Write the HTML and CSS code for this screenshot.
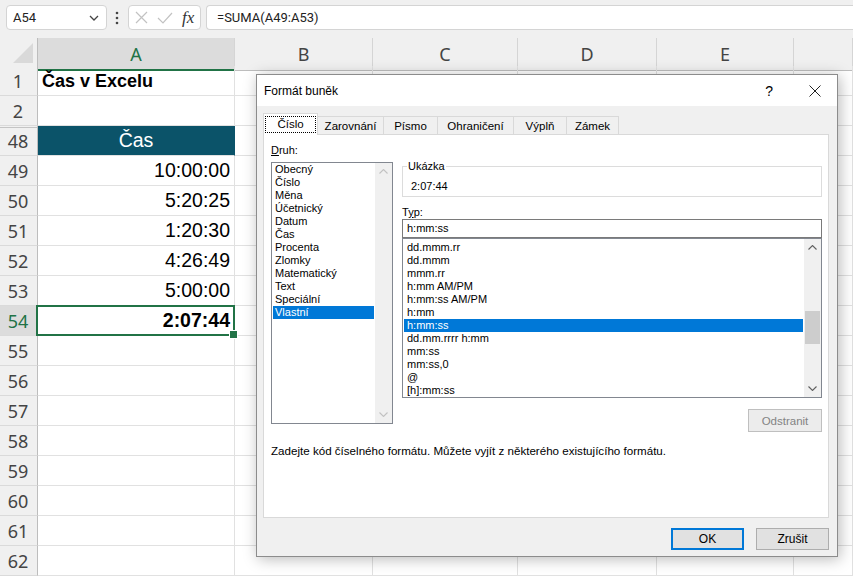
FILE: index.html
```html
<!DOCTYPE html>
<html lang="cs">
<head>
<meta charset="utf-8">
<title>Formát buněk</title>
<link rel="stylesheet" href="styles.css">
</head>
<body>
<div class="app">
  <div class="topbar">
    <div class="namebox"><span class="nb-text">A54</span><svg class="nb-chev" width="10" height="6" viewBox="0 0 10 6"><path d="M1 1l4 4 4-4"/></svg></div>
    <svg class="vdots" width="4" height="14" viewBox="0 0 4 14"><circle cx="2" cy="2" r="1.3"/><circle cx="2" cy="7" r="1.3"/><circle cx="2" cy="12" r="1.3"/></svg>
    <div class="fxbox">
      <svg class="ic-x" width="13" height="13" viewBox="0 0 13 13"><path d="M1 1l11 11M12 1L1 12"/></svg>
      <svg class="ic-ok" width="16" height="12" viewBox="0 0 16 12"><path d="M1 6l5 5L15 1"/></svg>
      <span class="fx">fx</span>
    </div>
    <div class="formula">=SUMA(A49:A53)</div>
  </div>

  <div class="sheet">
    <div class="row hdr">
      <div class="corner"><svg width="37" height="28" viewBox="0 0 37 28"><polygon points="33,5 33,25 13,25"/></svg></div>
      <div class="ch ch-sel">A</div><div class="ch">B</div><div class="ch">C</div><div class="ch">D</div><div class="ch">E</div><div class="ch"></div>
    </div>
    <div class="row"><div class="rh">1</div><div class="c title">Čas v Excelu</div><div class="c"></div><div class="c"></div><div class="c"></div><div class="c"></div><div class="c"></div></div>
    <div class="row"><div class="rh">2</div><div class="c"></div><div class="c"></div><div class="c"></div><div class="c"></div><div class="c"></div><div class="c"></div></div>
    <div class="row"><div class="rh rh-gap">48</div><div class="c head">Čas</div><div class="c"></div><div class="c"></div><div class="c"></div><div class="c"></div><div class="c"></div></div>
    <div class="row"><div class="rh">49</div><div class="c num">10:00:00</div><div class="c"></div><div class="c"></div><div class="c"></div><div class="c"></div><div class="c"></div></div>
    <div class="row"><div class="rh">50</div><div class="c num">5:20:25</div><div class="c"></div><div class="c"></div><div class="c"></div><div class="c"></div><div class="c"></div></div>
    <div class="row"><div class="rh">51</div><div class="c num">1:20:30</div><div class="c"></div><div class="c"></div><div class="c"></div><div class="c"></div><div class="c"></div></div>
    <div class="row"><div class="rh">52</div><div class="c num">4:26:49</div><div class="c"></div><div class="c"></div><div class="c"></div><div class="c"></div><div class="c"></div></div>
    <div class="row"><div class="rh">53</div><div class="c num">5:00:00</div><div class="c"></div><div class="c"></div><div class="c"></div><div class="c"></div><div class="c"></div></div>
    <div class="row"><div class="rh rh-sel">54</div><div class="c num bold cur">2:07:44</div><div class="c"></div><div class="c"></div><div class="c"></div><div class="c"></div><div class="c"></div></div>
    <div class="row"><div class="rh">55</div><div class="c"></div><div class="c"></div><div class="c"></div><div class="c"></div><div class="c"></div><div class="c"></div></div>
    <div class="row"><div class="rh">56</div><div class="c"></div><div class="c"></div><div class="c"></div><div class="c"></div><div class="c"></div><div class="c"></div></div>
    <div class="row"><div class="rh">57</div><div class="c"></div><div class="c"></div><div class="c"></div><div class="c"></div><div class="c"></div><div class="c"></div></div>
    <div class="row"><div class="rh">58</div><div class="c"></div><div class="c"></div><div class="c"></div><div class="c"></div><div class="c"></div><div class="c"></div></div>
    <div class="row"><div class="rh">59</div><div class="c"></div><div class="c"></div><div class="c"></div><div class="c"></div><div class="c"></div><div class="c"></div></div>
    <div class="row"><div class="rh">60</div><div class="c"></div><div class="c"></div><div class="c"></div><div class="c"></div><div class="c"></div><div class="c"></div></div>
    <div class="row"><div class="rh">61</div><div class="c"></div><div class="c"></div><div class="c"></div><div class="c"></div><div class="c"></div><div class="c"></div></div>
    <div class="row"><div class="rh">62</div><div class="c"></div><div class="c"></div><div class="c"></div><div class="c"></div><div class="c"></div><div class="c"></div></div>
  </div>

  <div class="dialog">
    <div class="dlg-title">
      <span class="dlg-name">Formát buněk</span>
      <span class="dlg-help">?</span>
      <svg class="dlg-close" width="12" height="12" viewBox="0 0 12 12"><path d="M0.5 0.5l11 11M11.5 0.5l-11 11"/></svg>
    </div>
    <div class="dlg-body">
      <div class="tabs">
        <div class="tab on t1"><span class="focus">Číslo</span></div>
        <div class="tab t2">Zarovnání</div>
        <div class="tab t3">Písmo</div>
        <div class="tab t4">Ohraničení</div>
        <div class="tab t5">Výplň</div>
        <div class="tab t6">Zámek</div>
      </div>
      <div class="panel">
        <div class="cols">
          <div class="col-left">
            <div class="lbl"><u>D</u>ruh:</div>
            <div class="listbox lb-left">
              <div class="items">
                <div class="item">Obecný</div>
                <div class="item">Číslo</div>
                <div class="item">Měna</div>
                <div class="item">Účetnický</div>
                <div class="item">Datum</div>
                <div class="item">Čas</div>
                <div class="item">Procenta</div>
                <div class="item">Zlomky</div>
                <div class="item">Matematický</div>
                <div class="item">Text</div>
                <div class="item">Speciální</div>
                <div class="item sel">Vlastní</div>
              </div>
              <div class="vscroll off">
                <div class="arrow"><svg width="9" height="5" viewBox="0 0 9 5"><path d="M0.5 4.5l4-4 4 4"/></svg></div>
                <div class="track"></div>
                <div class="arrow"><svg width="9" height="5" viewBox="0 0 9 5"><path d="M0.5 0.5l4 4 4-4"/></svg></div>
              </div>
            </div>
          </div>
          <div class="col-right">
            <fieldset class="sample"><legend>Ukázka</legend><div class="sample-val">2:07:44</div></fieldset>
            <div class="lbl typ">T<u>y</u>p:</div>
            <div class="input">h:mm:ss</div>
            <div class="listbox lb-right">
              <div class="items">
                <div class="item">dd.mmm.rr</div>
                <div class="item">dd.mmm</div>
                <div class="item">mmm.rr</div>
                <div class="item">h:mm AM/PM</div>
                <div class="item">h:mm:ss AM/PM</div>
                <div class="item">h:mm</div>
                <div class="item sel">h:mm:ss</div>
                <div class="item">dd.mm.rrrr h:mm</div>
                <div class="item">mm:ss</div>
                <div class="item">mm:ss,0</div>
                <div class="item">@</div>
                <div class="item">[h]:mm:ss</div>
              </div>
              <div class="vscroll">
                <div class="arrow"><svg width="9" height="5" viewBox="0 0 9 5"><path d="M0.5 4.5l4-4 4 4"/></svg></div>
                <div class="track"><div class="thumb"></div></div>
                <div class="arrow"><svg width="9" height="5" viewBox="0 0 9 5"><path d="M0.5 0.5l4 4 4-4"/></svg></div>
              </div>
            </div>
            <div class="btn disabled odst">Odstranit</div>
          </div>
        </div>
        <div class="desc">Zadejte kód číselného formátu. Můžete vyjít z některého existujícího formátu.</div>
      </div>
      <div class="buttons">
        <div class="btn primary">OK</div>
        <div class="btn">Zrušit</div>
      </div>
    </div>
  </div>
</div>
</body>
</html>
```

FILE: styles.css
```css
* { box-sizing: border-box; margin: 0; padding: 0; }
html, body { width: 853px; height: 578px; overflow: hidden; }
body { background: #fff; font-family: "Liberation Sans", Arial, sans-serif; color: #000; }
.app { position: relative; width: 853px; height: 578px; overflow: hidden; }

/* ---------- formula bar ---------- */
.topbar { height: 38px; background: #f0f0f0; display: flex; align-items: flex-start; padding: 5px 0 0 6px; }
.namebox { width: 101px; height: 25px; background: #fff; border: 1px solid #d4d4d4; border-radius: 4px; display: flex; align-items: center; justify-content: space-between; padding: 0 7px 0 6px; }
.nb-text { font-family: Roboto, "Liberation Sans", sans-serif; font-size: 13px; color: #222; }
.nb-chev path { stroke: #444; fill: none; stroke-width: 1.3; }
.vdots { margin: 6px 0 0 8px; }
.vdots circle { fill: #444; }
.fxbox { margin-left: 9px; width: 73px; height: 25px; background: #fff; border: 1px solid #d4d4d4; border-radius: 4px; display: flex; align-items: center; padding-left: 6px; }
.ic-x path, .ic-ok path { stroke: #c2c2c2; fill: none; stroke-width: 1.2; }
.ic-ok { margin-left: 9px; }
.fx { margin-left: 9px; font-family: "Liberation Serif", serif; font-style: italic; font-size: 17px; color: #333; }
.formula { margin-left: 5px; flex: 1; height: 25px; background: #fff; border: 1px solid #d4d4d4; border-right: none; border-radius: 4px 0 0 4px; padding-left: 10px; display: flex; align-items: center; font-family: Roboto, "Liberation Sans", sans-serif; font-size: 13px; color: #222; }

/* ---------- sheet ---------- */
.sheet { display: flex; flex-direction: column; }
.row { display: grid; grid-template-columns: 38px 197px 138px 145px 139px 137px 1fr; height: 30px; }
.row.hdr { height: 28px; }
.corner { background: #f0f0f0; border-right: 1px solid #bdbdbd; border-bottom: 1px solid #bdbdbd; }
.corner polygon { fill: #d9d9d9; }
.ch { background: #f0f0f0; border-right: 1px solid #d5d5d5; border-bottom: 1px solid #bdbdbd; display: flex; align-items: center; justify-content: center; font-family: "Noto Sans", sans-serif; font-size: 18px; color: #444; }
.ch-sel { background: #dcdcdc; color: #217346; border-bottom: 2px solid #217346; }
.rh { background: #f0f0f0; border-right: 1px solid #bdbdbd; border-bottom: 1px solid #dadada; display: flex; align-items: center; justify-content: center; font-family: "Noto Sans", sans-serif; font-size: 18px; color: #444; padding-right: 1px; }
.rh-gap { background: linear-gradient(#f0f0f0 0 1px, #c4c4c4 1px 2px, #f0f0f0 2px); }
.rh-sel { background: #dcdcdc; color: #217346; }
.c { border-right: 1px solid #e1e1e1; border-bottom: 1px solid #e1e1e1; display: flex; align-items: center; }
.title { font-weight: bold; font-size: 18px; padding-left: 4px; padding-top: 2px; }
.head { background: #0b5369; color: #fff; justify-content: center; font-size: 19.5px; border-right-color: #0b5369; }
.num { justify-content: flex-end; padding-right: 4px; font-size: 19.5px; }
.bold { font-weight: bold; }
.cur { position: relative; z-index: 2; }
.cur::after { content: ""; position: absolute; left: -2px; top: -1px; right: -1px; bottom: -1px; border: 2px solid #217346; }
.cur::before { content: ""; position: absolute; right: -4px; bottom: -4px; width: 7px; height: 7px; background: #217346; border: 1px solid #fff; z-index: 3; }

/* ---------- dialog ---------- */
.dialog { position: absolute; left: 256px; top: 74px; width: 582px; height: 483px; border: 1px solid #8c8c8c; background: #f0f0f0; box-shadow: 2px 2px 14px rgba(0,0,0,0.28); font-family: "Liberation Sans", Arial, sans-serif; font-size: 11px; z-index: 10; }
.dlg-title { height: 31px; background: #fff; display: flex; align-items: center; padding-left: 7px; }
.dlg-name { flex: 1; font-size: 12px; }
.dlg-help { font-size: 14px; margin-right: 36px; }
.dlg-close { margin-right: 16px; }
.dlg-close path { stroke: #222; stroke-width: 1; fill: none; }
.dlg-body { padding: 7px 8px 0 6px; }
.tabs { display: flex; align-items: flex-end; height: 21px; position: relative; z-index: 1; }
.tab { height: 18px; border: 1px solid #d9d9d9; border-left: none; border-bottom: none; display: flex; align-items: center; justify-content: center; background: #f0f0f0; font-size: 11.5px; }
.tab.on { height: 22px; margin-bottom: -1px; background: #fff; border-left: 1px solid #d9d9d9; padding-bottom: 1px; }
.t1 { width: 55px; } .t2 { width: 66px; } .t3 { width: 54px; } .t4 { width: 76px; } .t5 { width: 53px; } .t6 { width: 52px; }
.focus { outline: 1px dotted #000; outline-offset: 0; padding: 1px 11px 2px; }
.panel { height: 384px; background: #fff; border: 1px solid #d9d9d9; padding: 9px 6px 0 7px; }
.cols { display: flex; gap: 9px; align-items: flex-start; }
.col-left { width: 122px; display: flex; flex-direction: column; }
.col-right { width: 420px; display: flex; flex-direction: column; }
.lbl { line-height: 13px; }
.col-left .lbl { margin-bottom: 5px; }
.listbox { display: flex; background: #fff; border: 1px solid #828790; overflow: hidden; }
.lb-left { height: 262px; }
.lb-right { height: 160px; }
.items { flex: 1; padding: 0 1px; min-width: 0; }
.lb-right .items { padding-top: 2px; }
.item { line-height: 13px; height: 13px; padding-left: 2px; white-space: nowrap; }
.lb-right .item { padding-left: 3px; }
.item.sel { background: #0078d7; color: #fff; }
.vscroll { width: 17px; background: #f0f0f0; display: flex; flex-direction: column; }
.arrow { height: 17px; display: flex; align-items: center; justify-content: center; }
.arrow path { stroke: #606060; stroke-width: 1.1; fill: none; }
.vscroll.off .arrow path { stroke: #c2c2c2; }
.track { flex: 1; padding: 55px 1px 0; }
.thumb { height: 33px; background: #cdcdcd; }
.sample { border: 1px solid #dcdcdc; padding: 0 0 3px 4px; margin-top: 16px; height: 37px; }
.sample legend { padding: 0 1px; line-height: 13px; }
.sample-val { margin-top: 7px; padding-left: 4px; line-height: 13px; }
.typ { margin-top: 9px; }
.input { height: 19px; border: 1px solid #7a7a7a; padding-left: 4px; line-height: 17px; }
.btn { height: 22px; display: flex; align-items: center; justify-content: center; border: 1px solid #adadad; background: #e1e1e1; font-size: 12px; }
.btn.disabled { color: #838383; border-color: #bfbfbf; background: #ececec; }
.odst { align-self: flex-end; width: 74px; height: 23px; margin-top: 11px; font-size: 11.5px; }
.desc { margin-top: 12px; line-height: 13px; font-size: 11.6px; }
.buttons { display: flex; justify-content: flex-end; gap: 12px; margin-top: 10px; }
.buttons .btn { width: 73px; }
.btn.primary { border: 2px solid #0078d7; }
```
